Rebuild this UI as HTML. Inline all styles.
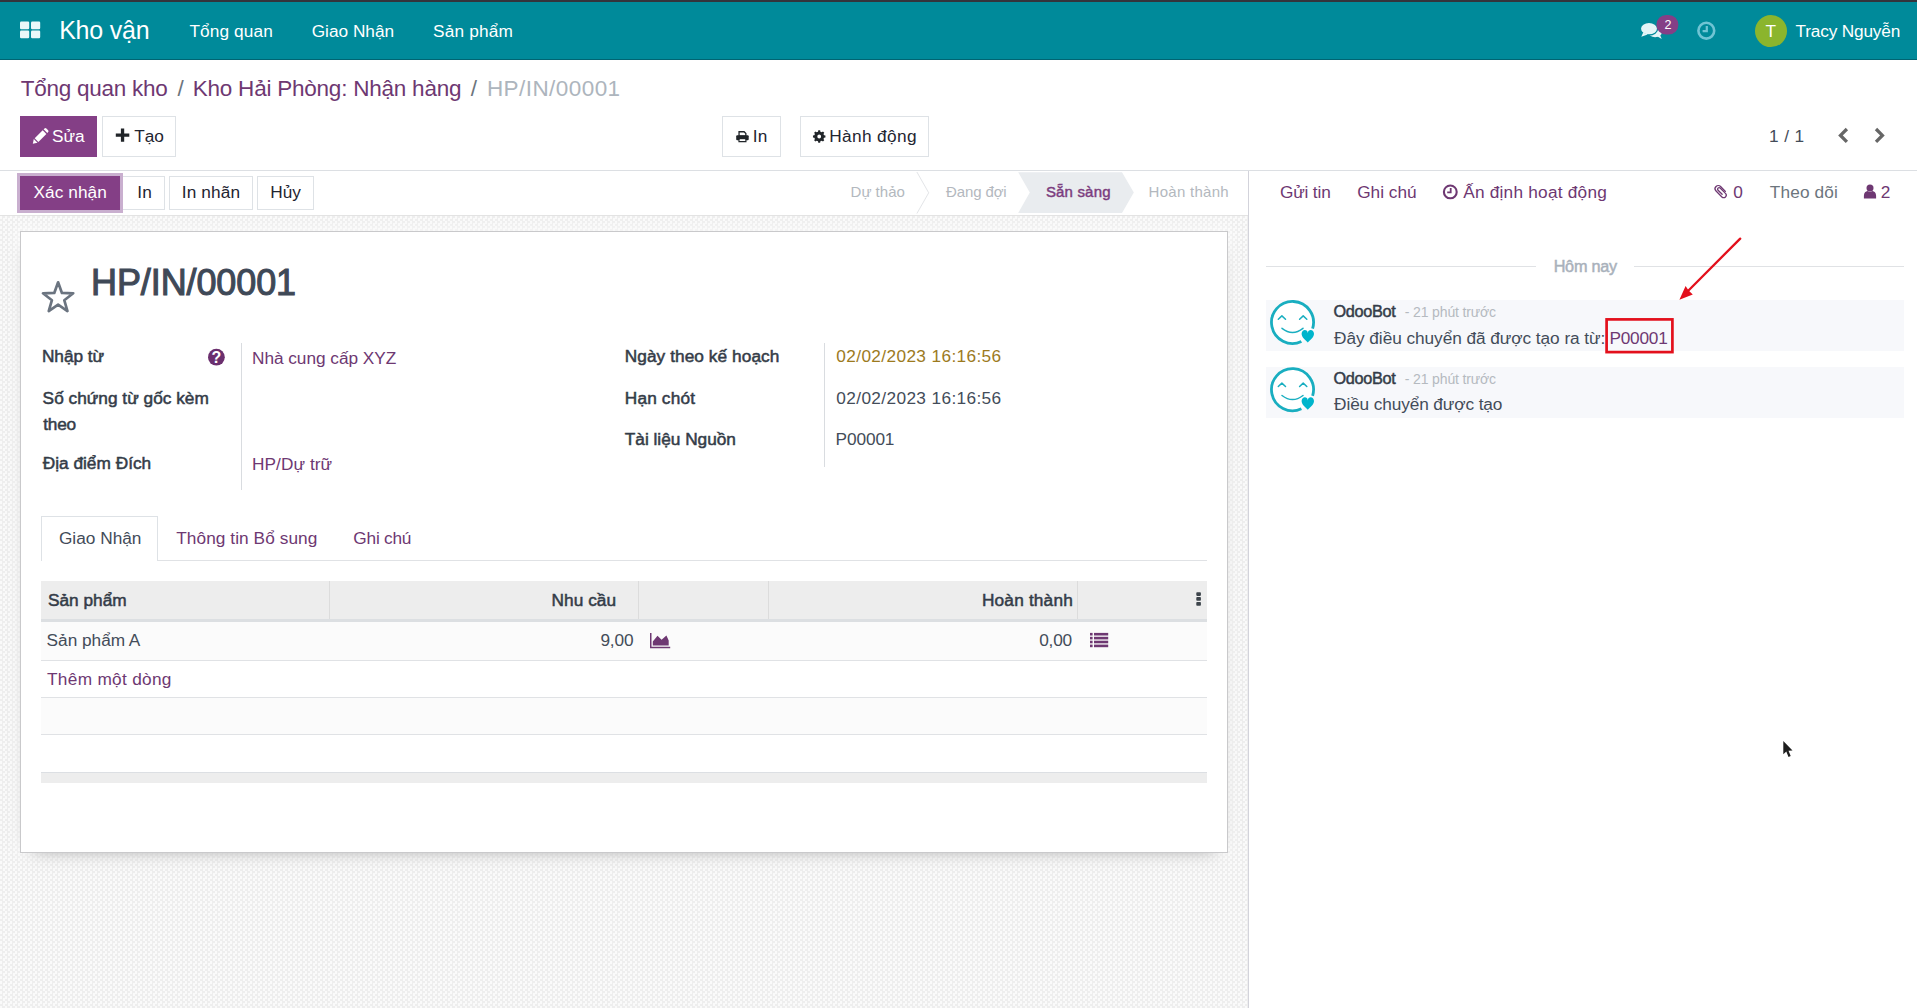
<!DOCTYPE html>
<html lang="vi">
<head>
<meta charset="utf-8">
<title>HP/IN/00001 - Kho vận</title>
<style>
html,body{margin:0;padding:0}
body{width:1917px;height:1008px;position:relative;overflow:hidden;background:#fff;
  font-family:"Liberation Sans",sans-serif;font-size:17.5px;color:#495057}
.abs,.t,svg.ic{position:absolute}
.t{white-space:pre;line-height:24px;height:24px}
svg.ic{left:0;top:0;width:1917px;height:1008px;overflow:visible;pointer-events:none}
#topline{left:0;top:0;width:1917px;height:2px;background:#34343c}
#navbar{left:0;top:2px;width:1917px;height:57px;background:#008a9a;border-bottom:1px solid #006472}
#cp{left:0;top:60px;width:1917px;height:110px;background:#fff;border-bottom:1px solid #dcdfe3}
.btn{box-sizing:border-box;border:1px solid #dee2e6;background:#fff}
.btn.pri{background:#843f86;border-color:#843f86}
#statusbar{left:0;top:171px;width:1248px;height:44px;background:#fff}
#sheetbg{left:0;top:215px;width:1248px;height:793px;
  background:conic-gradient(#eeeeee 25%,#fafafa 0 50%,#eeeeee 0 75%,#fafafa 0) 0 0/5px 5px;border-top:1px solid #e3e3e3;box-sizing:border-box}
#sheet{left:20px;top:231px;width:1208px;height:622px;box-sizing:border-box;background:#fff;border:1px solid #c9c9cb;
  box-shadow:0 6px 18px -12px rgba(0,0,0,.55), 0 0 12px 2px rgba(255,255,255,.8)}
#chatter{left:1248px;top:171px;width:669px;height:837px;background:#fff;border-left:1px solid #d3d3db;box-sizing:border-box}
.msg{left:1265.8px;width:638.2px;background:#f7f8fb}
.hl{background:#e0e2e5;height:1px}
.vl{background:#d9dce0;width:1px}
</style>
</head>
<body>
<div id="topline" class="abs"></div>

<!-- ================= NAVBAR ================= -->
<header id="navbar" class="abs"></header>
<svg class="ic" viewBox="0 0 1917 1008">
  <!-- apps grid -->
  <g fill="#e9f8f9">
    <rect x="20" y="21.6" width="9.2" height="7.6" rx="1.2"/><rect x="31" y="21.6" width="9.2" height="7.6" rx="1.2"/>
    <rect x="20" y="30.6" width="9.2" height="7.6" rx="1.2"/><rect x="31" y="30.6" width="9.2" height="7.6" rx="1.2"/>
  </g>
  <!-- comments icon -->
  <g fill="#e4f5f7" transform="translate(-0.3 -0.9)">
    <ellipse cx="1655.4" cy="33.2" rx="6.8" ry="5"/>
    <path d="M1657 37 L1662 40 L1660.2 35.5Z"/>
    <ellipse cx="1649.3" cy="29.6" rx="8.6" ry="6.3" stroke="#008a9a" stroke-width="1.3"/>
    <path d="M1643.5 33.5 L1641.6 37.6 L1648 35.3Z"/>
  </g>
  <rect x="1656.4" y="14.9" width="22" height="19.6" rx="9.8" fill="#843f86"/>
  <!-- activity clock -->
  <g fill="none" stroke="#70c4d4" stroke-width="2.6">
    <circle cx="1706.3" cy="30.7" r="7.9"/>
    <path d="M1706.8 26 V31.2 H1702.6" stroke-width="2.2"/>
  </g>
  <circle cx="1771" cy="31.1" r="16" fill="#8bb52d"/>
</svg>
<nav>
<span class="t" style="left:59.15px;top:18.34px;font-size:25px;color:#fff;letter-spacing:-0.206px;">Kho vận</span>
<span class="t" style="left:189.41px;top:19.02px;font-size:17.25px;color:#fff;letter-spacing:0.12px;">Tổng quan</span>
<span class="t" style="left:311.73px;top:19.02px;font-size:17.25px;color:#fff;letter-spacing:-0.014px;">Giao Nhận</span>
<span class="t" style="left:433.02px;top:19.02px;font-size:17.25px;color:#fff;letter-spacing:0.176px;">Sản phẩm</span>
<span class="t" style="left:1795.61px;top:19.02px;font-size:17.25px;color:#fff;letter-spacing:-0.193px;">Tracy Nguyễn</span>
<span class="t" style="left:1765.61px;top:19.02px;font-size:17.25px;color:#fff;">T</span>
<span class="t" style="left:1664.57px;top:12.67px;font-size:12.5px;color:#fff;">2</span>
</nav>

<!-- ================= CONTROL PANEL ================= -->
<section id="cp" class="abs"></section>
<div class="abs btn pri" style="left:20px;top:116px;width:77px;height:41px"></div>
<div class="abs btn" style="left:102.2px;top:116px;width:73.6px;height:41px"></div>
<div class="abs btn" style="left:722.2px;top:116px;width:58.7px;height:41px"></div>
<div class="abs btn" style="left:800.2px;top:116px;width:128.5px;height:41px"></div>
<svg class="ic" viewBox="0 0 1917 1008">
  <!-- pencil -->
  <g fill="#fff" transform="translate(32.8 128.2)">
    <path d="M0 15.6 L1 10.9 L4.7 14.6Z"/>
    <path d="M1.9 10 L9.9 2 L13.6 5.7 L5.6 13.7Z"/>
    <path d="M10.8 1.1 L11.7 .3 a1.3 1.3 0 0 1 1.9 0 L15.3 2 a1.3 1.3 0 0 1 0 1.9 L14.5 4.8Z"/>
  </g>
  <!-- plus -->
  <path d="M120.9 128.4 h3.3 v5 h5.1 v3.4 h-5.1 v5 h-3.3 v-5 h-5.1 v-3.4 h5.1Z" fill="#212529"/>
  <!-- print -->
  <g fill="#212529">
    <rect x="736.2" y="135.2" width="12.5" height="5" rx="1"/>
    <path d="M738.4 131.1 h6 l2.1 2.1 v3 h-8.1Z M739.7 132.4 v3 h5.5 v-1.7 l-1.3 -1.3Z" fill-rule="evenodd"/>
    <path d="M738.4 138 h8.1 v4.2 h-8.1Z M739.7 139.2 v1.8 h5.5 v-1.8Z" fill-rule="evenodd"/>
    <rect x="739.7" y="139.2" width="5.5" height="1.8" fill="#fff"/>
  </g>
  <!-- cog -->
  <path fill="#212529" fill-rule="evenodd" d="M824.06 135.33 L825.43 135.56 L825.43 137.44 L824.06 137.67 L823.46 139.11 L824.27 140.24 L822.94 141.57 L821.81 140.76 L820.37 141.36 L820.14 142.73 L818.26 142.73 L818.03 141.36 L816.59 140.76 L815.46 141.57 L814.13 140.24 L814.94 139.11 L814.34 137.67 L812.97 137.44 L812.97 135.56 L814.34 135.33 L814.94 133.89 L814.13 132.76 L815.46 131.43 L816.59 132.24 L818.03 131.64 L818.26 130.27 L820.14 130.27 L820.37 131.64 L821.81 132.24 L822.94 131.43 L824.27 132.76 L823.46 133.89Z M821.10 136.50 A1.9 1.9 0 1 0 817.30 136.50 A1.9 1.9 0 1 0 821.10 136.50Z"/>
  <!-- pager chevrons -->
  <g fill="none" stroke="#666" stroke-width="3.3">
    <path d="M1846.9 129 L1840.5 135.4 L1846.9 141.8"/>
    <path d="M1876 129 L1882.4 135.4 L1876 141.8"/>
  </g>
</svg>
<div>
<span class="t" style="left:20.69px;top:77.2px;font-size:22.5px;color:#6e3872;letter-spacing:-0.254px;">Tổng quan kho</span>
<span class="t" style="left:177.4px;top:77.2px;font-size:22.5px;color:#6c757d;">/</span>
<span class="t" style="left:192.75px;top:77.2px;font-size:22.5px;color:#6e3872;letter-spacing:-0.228px;">Kho Hải Phòng: Nhận hàng</span>
<span class="t" style="left:470.8px;top:77.2px;font-size:22.5px;color:#6c757d;">/</span>
<span class="t" style="left:486.95px;top:77.2px;font-size:22.5px;color:#adb5bd;letter-spacing:0.433px;">HP/IN/00001</span>
<span class="t" style="left:51.98px;top:124.02px;font-size:17.25px;color:#fff;">Sửa</span>
<span class="t" style="left:134.2px;top:124.02px;font-size:17.25px;color:#1f2531;">Tạo</span>
<span class="t" style="left:752.87px;top:124.02px;font-size:17.25px;color:#1f2531;">In</span>
<span class="t" style="left:829.18px;top:124.02px;font-size:17.25px;color:#1f2531;letter-spacing:0.384px;">Hành động</span>
<span class="t" style="left:1768.89px;top:124.02px;font-size:17.25px;color:#434c59;letter-spacing:0.435px;">1 / 1</span>
</div>

<!-- ================= STATUS BAR ================= -->
<section id="statusbar" class="abs"></section>
<div class="abs btn" style="left:122px;top:176px;width:42.7px;height:34px"></div>
<div class="abs btn pri" style="left:20px;top:176px;width:100.2px;height:34px;box-shadow:0 0 0 3px #c9afcf"></div>
<div class="abs btn" style="left:169.3px;top:176px;width:83.4px;height:34px"></div>
<div class="abs btn" style="left:257.3px;top:176px;width:56.5px;height:34px"></div>
<svg class="ic" viewBox="0 0 1917 1008">
  <path d="M916.9 172 L928.7 192.8 L916.9 213.5" fill="none" stroke="#e3e5e8" stroke-width="1"/>
  <path d="M1018.2 172.2 H1122 L1133.8 192.6 L1122 213 H1018.2 L1029.8 192.6Z" fill="#e9ecef"/>
</svg>
<div>
<span class="t" style="left:33.41px;top:180.02px;font-size:17.25px;color:#fff;letter-spacing:0.072px;">Xác nhận</span>
<span class="t" style="left:137.37px;top:180.02px;font-size:17.25px;color:#1f2531;">In</span>
<span class="t" style="left:181.81px;top:180.02px;font-size:17.25px;color:#1f2531;letter-spacing:0.122px;">In nhãn</span>
<span class="t" style="left:270.27px;top:180.02px;font-size:17.25px;color:#1f2531;">Hủy</span>
<span class="t" style="left:850.57px;top:179.8px;font-size:15px;color:#b3b8be;letter-spacing:0.005px;">Dự thảo</span>
<span class="t" style="left:946.1px;top:179.8px;font-size:15px;color:#b3b8be;letter-spacing:-0.138px;">Đang đợi</span>
<span class="t" style="left:1045.92px;top:179.8px;font-size:15px;color:#7b3c7e;-webkit-text-stroke:0.45px #7b3c7e;letter-spacing:0.172px;">Sẵn sàng</span>
<span class="t" style="left:1148.57px;top:179.8px;font-size:15px;color:#b3b8be;letter-spacing:0.286px;">Hoàn thành</span>
</div>

<!-- ================= FORM SHEET ================= -->
<main id="sheetbg" class="abs"></main>
<article id="sheet" class="abs"></article>
<div class="abs vl" style="left:241px;top:343px;height:147px"></div>
<div class="abs vl" style="left:823.5px;top:343px;height:124px"></div>
<!-- notebook tabs -->
<div class="abs hl" style="left:41px;top:559.5px;width:1166px"></div>
<div class="abs" style="left:41px;top:516px;width:117px;height:44.5px;box-sizing:border-box;border:1px solid #dee2e6;border-bottom:0;background:#fff"></div>
<!-- list table -->
<div class="abs" style="left:41px;top:581px;width:1166px;height:38px;background:#ededed"></div>
<div class="abs" style="left:41px;top:619px;width:1166px;height:3px;background:#dcdfe2"></div>
<div class="abs" style="left:329px;top:581px;width:1px;height:38px;background:#dcdcdc"></div>
<div class="abs" style="left:638px;top:581px;width:1px;height:38px;background:#dcdcdc"></div>
<div class="abs" style="left:768px;top:581px;width:1px;height:38px;background:#dcdcdc"></div>
<div class="abs" style="left:1077px;top:581px;width:1px;height:38px;background:#dcdcdc"></div>
<div class="abs" style="left:41px;top:622px;width:1166px;height:38px;background:#fbfbfb"></div>
<div class="abs hl" style="left:41px;top:660px;width:1166px"></div>
<div class="abs hl" style="left:41px;top:697px;width:1166px"></div>
<div class="abs" style="left:41px;top:698px;width:1166px;height:36px;background:#fbfbfb"></div>
<div class="abs hl" style="left:41px;top:734px;width:1166px"></div>
<div class="abs" style="left:41px;top:772px;width:1166px;height:10.7px;background:#ededed;border-top:1px solid #dcdfe3;box-sizing:border-box"></div>
<svg class="ic" viewBox="0 0 1917 1008">
  <!-- priority star -->
  <path d="M58.10 282.30 L61.92 292.94 L73.22 293.29 L64.28 300.21 L67.45 311.06 L58.10 304.70 L48.75 311.06 L51.92 300.21 L42.98 293.29 L54.28 292.94Z" fill="none" stroke="#6b7480" stroke-width="2.7" stroke-linejoin="round"/>
  <!-- help -->
  <circle cx="216.4" cy="357.2" r="8.4" fill="#6b2f6e"/>
  <!-- kebab -->
  <g fill="#3d444b"><rect x="1196.3" y="592.2" width="4.6" height="3.7" rx=".8"/><rect x="1196.3" y="597.1" width="4.6" height="3.7" rx=".8"/><rect x="1196.3" y="602" width="4.6" height="3.7" rx=".8"/></g>
  <!-- area chart -->
  <g fill="#6e3872">
    <path d="M650 632.9 h1.5 v13.8 h18.7 v1.5 h-20.2Z"/>
    <path d="M652.8 645.5 V641.5 L657.5 635.8 L661.6 639.8 L666.4 635.4 L668.7 640.6 V645.5Z"/>
  </g>
  <!-- list -->
  <g fill="#6e3872">
    <rect x="1090" y="632.9" width="2.6" height="2.6"/><rect x="1094" y="632.9" width="14.2" height="2.6"/>
    <rect x="1090" y="636.8" width="2.6" height="2.6"/><rect x="1094" y="636.8" width="14.2" height="2.6"/>
    <rect x="1090" y="640.7" width="2.6" height="2.6"/><rect x="1094" y="640.7" width="14.2" height="2.6"/>
    <rect x="1090" y="644.6" width="2.6" height="2.6"/><rect x="1094" y="644.6" width="14.2" height="2.6"/>
  </g>
</svg>
<div>
<span class="t" style="left:91.05px;top:270.53px;font-size:36px;color:#3f4957;-webkit-text-stroke:1.08px #3f4957;letter-spacing:-0.105px;">HP/IN/00001</span>
<span class="t" style="left:41.98px;top:344.02px;font-size:17.25px;color:#343c48;-webkit-text-stroke:0.52px #343c48;letter-spacing:-0.055px;">Nhập từ</span>
<span class="t" style="left:42.62px;top:386.02px;font-size:17.25px;color:#343c48;-webkit-text-stroke:0.52px #343c48;letter-spacing:0.012px;">Số chứng từ gốc kèm</span>
<span class="t" style="left:43.14px;top:412.02px;font-size:17.25px;color:#343c48;-webkit-text-stroke:0.52px #343c48;letter-spacing:-0.164px;">theo</span>
<span class="t" style="left:42.68px;top:451.02px;font-size:17.25px;color:#343c48;-webkit-text-stroke:0.52px #343c48;letter-spacing:0.014px;">Địa điểm Đích</span>
<span class="t" style="left:251.98px;top:346.02px;font-size:17.25px;color:#6e3872;letter-spacing:-0.032px;">Nhà cung cấp XYZ</span>
<span class="t" style="left:251.98px;top:452.02px;font-size:17.25px;color:#6e3872;letter-spacing:0.064px;">HP/Dự trữ</span>
<span class="t" style="left:624.78px;top:344.02px;font-size:17.25px;color:#343c48;-webkit-text-stroke:0.52px #343c48;letter-spacing:0.067px;">Ngày theo kế hoạch</span>
<span class="t" style="left:624.78px;top:386.02px;font-size:17.25px;color:#343c48;-webkit-text-stroke:0.52px #343c48;letter-spacing:0.168px;">Hạn chót</span>
<span class="t" style="left:624.81px;top:427.02px;font-size:17.25px;color:#343c48;-webkit-text-stroke:0.52px #343c48;letter-spacing:-0.007px;">Tài liệu Nguồn</span>
<span class="t" style="left:836.33px;top:344.02px;font-size:17.25px;color:#9c7a1e;letter-spacing:0.365px;">02/02/2023 16:16:56</span>
<span class="t" style="left:836.33px;top:386.02px;font-size:17.25px;color:#434c59;letter-spacing:0.365px;">02/02/2023 16:16:56</span>
<span class="t" style="left:835.58px;top:427.02px;font-size:17.25px;color:#434c59;letter-spacing:-0.119px;">P00001</span>
<span class="t" style="left:211.47px;top:346.46px;font-size:16px;color:#fff;font-weight:700;">?</span>
<span class="t" style="left:58.93px;top:526.02px;font-size:17.25px;color:#434c59;letter-spacing:0.006px;">Giao Nhận</span>
<span class="t" style="left:176.21px;top:526.02px;font-size:17.25px;color:#6e3872;letter-spacing:0.07px;">Thông tin Bổ sung</span>
<span class="t" style="left:353.33px;top:526.02px;font-size:17.25px;color:#6e3872;letter-spacing:-0.232px;">Ghi chú</span>
<span class="t" style="left:48.02px;top:588.02px;font-size:17.25px;color:#343c48;-webkit-text-stroke:0.52px #343c48;letter-spacing:-0.006px;">Sản phẩm</span>
<span class="t" style="left:551.58px;top:588.02px;font-size:17.25px;color:#343c48;-webkit-text-stroke:0.52px #343c48;letter-spacing:0.033px;">Nhu cầu</span>
<span class="t" style="left:981.98px;top:588.02px;font-size:17.25px;color:#343c48;-webkit-text-stroke:0.52px #343c48;letter-spacing:0.177px;">Hoàn thành</span>
<span class="t" style="left:46.62px;top:628.02px;font-size:17.25px;color:#434c59;letter-spacing:-0.024px;">Sản phẩm A</span>
<span class="t" style="left:600.39px;top:628.02px;font-size:17.25px;color:#434c59;letter-spacing:-0.119px;">9,00</span>
<span class="t" style="left:1039.13px;top:628.02px;font-size:17.25px;color:#434c59;letter-spacing:-0.163px;">0,00</span>
<span class="t" style="left:47.01px;top:667.02px;font-size:17.25px;color:#6e3872;letter-spacing:0.303px;">Thêm một dòng</span>
</div>

<!-- ================= CHATTER ================= -->
<aside id="chatter" class="abs"></aside>
<div class="abs hl" style="left:1265.8px;top:266px;width:270px"></div>
<div class="abs hl" style="left:1633.5px;top:266px;width:270.4px"></div>
<div class="abs msg" style="top:300px;height:50.6px"></div>
<div class="abs msg" style="top:367.2px;height:50.6px"></div>
<svg class="ic" viewBox="0 0 1917 1008">
  <!-- schedule activity clock -->
  <g fill="none" stroke="#6e3872" stroke-width="2.1">
    <circle cx="1450.3" cy="191.9" r="6.4"/>
    <path d="M1450.7 188 V192.4 H1447.2" stroke-width="1.8"/>
  </g>
  <!-- paperclip -->
  <path d="M3.2 3 V-3.8 A3.2 3.2 0 0 0 -3.2 -3.8 V4.5 A2.5 2.5 0 0 0 1.8 4.5 V-3 A1.5 1.5 0 0 0 -1.2 -3 V2.8" transform="translate(1721 191.5) rotate(-45)" fill="none" stroke="#6e3872" stroke-width="1.3" stroke-linecap="round"/>
  <!-- followers user -->
  <g fill="#6e3872">
    <circle cx="1870" cy="187.9" r="3.5"/>
    <path d="M1863.9 198.4 v-2.6 c0 -3 1.8 -4.6 3.6 -4.8 c1.5 1.1 3.5 1.1 5 0 c1.8 .2 3.6 1.8 3.6 4.8 v2.6Z"/>
  </g>
  <!-- OdooBot avatars -->
  <g>
    <circle cx="1292.5" cy="322.5" r="21" fill="#fff"/>
    <path d="M1301.4 341.5 A21 21 0 1 1 1312.6 328.6" fill="none" stroke="#19aec0" stroke-width="2.8"/>
    <g fill="none" stroke="#19aec0" stroke-width="1.5" stroke-linecap="round" stroke-linejoin="round">
      <path d="M1278.3 319.3 L1281.9 315.9 L1285.5 319.3"/>
      <path d="M1299.6 319.3 L1303.2 315.9 L1306.8 319.3"/>
      <path d="M1282 328.3 Q1292.5 336.5 1303 328.3"/>
    </g>
    <path transform="translate(1307.8 336.3) scale(12.4)" d="M0 -.25 C0 -.6 -.5 -.6 -.5 -.2 C-.5 .1 -.2 .3 0 .5 C.2 .3 .5 .1 .5 -.2 C.5 -.6 0 -.6 0 -.25Z" fill="#00b5cc"/>
  </g>
  <g transform="translate(0 67.2)">
    <circle cx="1292.5" cy="322.5" r="21" fill="#fff"/>
    <path d="M1301.4 341.5 A21 21 0 1 1 1312.6 328.6" fill="none" stroke="#19aec0" stroke-width="2.8"/>
    <g fill="none" stroke="#19aec0" stroke-width="1.5" stroke-linecap="round" stroke-linejoin="round">
      <path d="M1278.3 319.3 L1281.9 315.9 L1285.5 319.3"/>
      <path d="M1299.6 319.3 L1303.2 315.9 L1306.8 319.3"/>
      <path d="M1282 328.3 Q1292.5 336.5 1303 328.3"/>
    </g>
    <path transform="translate(1307.8 336.3) scale(12.4)" d="M0 -.25 C0 -.6 -.5 -.6 -.5 -.2 C-.5 .1 -.2 .3 0 .5 C.2 .3 .5 .1 .5 -.2 C.5 -.6 0 -.6 0 -.25Z" fill="#00b5cc"/>
  </g>
</svg>
<div>
<span class="t" style="left:1279.93px;top:180.02px;font-size:17.25px;color:#6e3872;letter-spacing:-0.164px;">Gửi tin</span>
<span class="t" style="left:1357.13px;top:180.02px;font-size:17.25px;color:#6e3872;letter-spacing:0.015px;">Ghi chú</span>
<span class="t" style="left:1463.17px;top:180.02px;font-size:17.25px;color:#6e3872;letter-spacing:0.227px;">Ấn định hoạt động</span>
<span class="t" style="left:1733.13px;top:180.02px;font-size:17.25px;color:#6e3872;">0</span>
<span class="t" style="left:1769.81px;top:180.02px;font-size:17.25px;color:#6c757d;letter-spacing:0.141px;">Theo dõi</span>
<span class="t" style="left:1880.73px;top:180.02px;font-size:17.25px;color:#6e3872;">2</span>
<span class="t" style="left:1553.67px;top:254.37px;font-size:16.25px;color:#a9b1bb;-webkit-text-stroke:0.49px #a9b1bb;letter-spacing:-0.269px;">Hôm nay</span>
<span class="t" style="left:1333.43px;top:299.37px;font-size:16.25px;color:#343c48;-webkit-text-stroke:0.49px #343c48;letter-spacing:-0.3px;">OdooBot</span>
<span class="t" style="left:1404.78px;top:300.15px;font-size:14px;color:#b5bac0;letter-spacing:-0.136px;">- 21 phút trước</span>
<span class="t" style="left:1334.08px;top:326.02px;font-size:17.25px;color:#434c59;letter-spacing:-0.057px;">Đây điều chuyển đã được tạo ra từ:</span>
<span class="t" style="left:1609.38px;top:326.02px;font-size:17.25px;color:#6e3872;letter-spacing:-0.203px;">P00001</span>
<span class="t" style="left:1333.43px;top:366.37px;font-size:16.25px;color:#343c48;-webkit-text-stroke:0.49px #343c48;letter-spacing:-0.3px;">OdooBot</span>
<span class="t" style="left:1404.78px;top:367.15px;font-size:14px;color:#b5bac0;letter-spacing:-0.136px;">- 21 phút trước</span>
<span class="t" style="left:1334.08px;top:392.02px;font-size:17.25px;color:#434c59;letter-spacing:-0.118px;">Điều chuyển được tạo</span>
</div>

<!-- ================= ANNOTATIONS ================= -->
<svg class="ic" viewBox="0 0 1917 1008">
  <rect x="1606.6" y="319.4" width="65.8" height="32.7" fill="none" stroke="#e3101c" stroke-width="2.7"/>
  <path d="M1740.2 238.6 L1687 292" stroke="#e3101c" stroke-width="2.3" stroke-linecap="round" fill="none"/>
  <path d="M1679.4 299.7 L1685.6 286.1 L1688.6 290.6 L1692.8 294.4Z" fill="#e3101c"/>
  <!-- mouse pointer -->
  <path d="M1783.3 741 V754.3 L1786.3 751.6 L1788.5 756.9 L1790.7 756 L1788.5 750.8 L1792.5 750.5Z" fill="#1e1e1e" stroke="#fff" stroke-width="1.6" stroke-linejoin="round" paint-order="stroke"/>
</svg>
</body>
</html>
